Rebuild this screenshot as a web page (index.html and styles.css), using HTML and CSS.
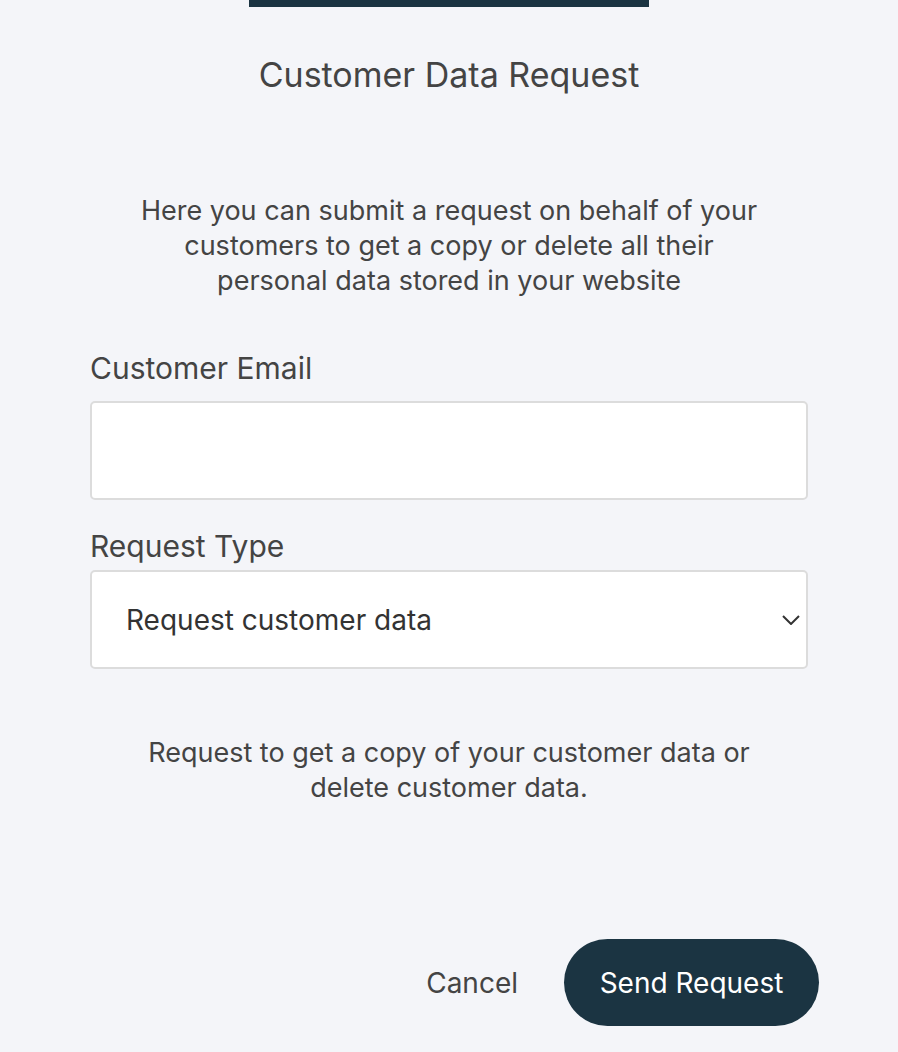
FILE: index.html
```html
<!DOCTYPE html>
<html lang="en">
<head>
    <meta charset="UTF-8">
    <meta name="viewport" content="width=device-width, initial-scale=1.0">
    <title>Customer Data Request</title>
    <link rel="stylesheet" href="styles.css">
</head>
<body>
    <div class="top-bar"></div>

    <div class="modal">
        <h2 class="title">Customer Data Request</h2>

        <p class="intro">Here you can submit a request on behalf of your customers to get a copy or delete all their personal data stored in your website</p>

        <div class="field">
            <label for="customer-email">Customer Email</label>
            <input type="email" id="customer-email">
        </div>

        <div class="field field-type">
            <label for="request-type">Request Type</label>
            <div class="select-wrap">
                <select id="request-type">
                    <option>Request customer data</option>
                    <option>Delete customer data</option>
                </select>
                <svg class="chevron" width="18" height="10" viewBox="0 0 18 10">
                    <path d="M1 1l8 8 8-8" fill="none" stroke="#333" stroke-width="2"/>
                </svg>
            </div>
        </div>

        <p class="note">Request to get a copy of your customer data or delete customer data.</p>

        <div class="actions">
            <button class="cancel">Cancel</button>
            <button class="send">Send Request</button>
        </div>
    </div>
</body>
</html>
```

FILE: styles.css
```css
* {
    margin: 0;
    padding: 0;
    box-sizing: border-box;
}
body {
    background-color: #f4f5f9;
    font-family: Inter, "Noto Sans", sans-serif;
    color: #444;
}
.top-bar {
    width: 400px;
    height: 7px;
    margin: 0 auto;
    background-color: #1b3442;
}
.modal {
    width: 718px;
    margin: 0 auto;
}
.title {
    font-size: 34px;
    line-height: 40px;
    font-weight: 400;
    text-align: center;
    margin-top: 48px;
}
.intro {
    max-width: 640px;
    font-size: 27px;
    line-height: 35px;
    text-align: center;
    margin: 98px auto 0;
}
.field {
    margin-top: 52px;
}
.field label {
    display: block;
    font-size: 30px;
    line-height: 36px;
    margin-bottom: 15px;
}
.field-type {
    margin-top: 28px;
}
.field-type label {
    margin-bottom: 6px;
}
.field input,
.field select {
    width: 100%;
    height: 99px;
    border: 2px solid #dcdcdc;
    border-radius: 5px;
    background-color: #fff;
    font-family: inherit;
    font-size: 28px;
    color: #333;
    outline: none;
}
.select-wrap {
    position: relative;
}
.field select {
    appearance: none;
    padding-left: 34px;
}
.chevron {
    position: absolute;
    right: 8px;
    top: 45px;
}
.note {
    max-width: 640px;
    font-size: 27px;
    line-height: 35px;
    text-align: center;
    margin: 66px auto 0;
}
.actions {
    display: flex;
    justify-content: flex-end;
    align-items: center;
    gap: 46px;
    margin-top: 134px;
    margin-right: -11px;
}
.actions button {
    font-family: inherit;
    font-size: 28px;
    border: none;
    cursor: pointer;
}
.cancel {
    background: none;
    color: #444;
}
.send {
    width: 255px;
    height: 87px;
    border-radius: 44px;
    background-color: #1b3442;
    color: #fff;
}
```
